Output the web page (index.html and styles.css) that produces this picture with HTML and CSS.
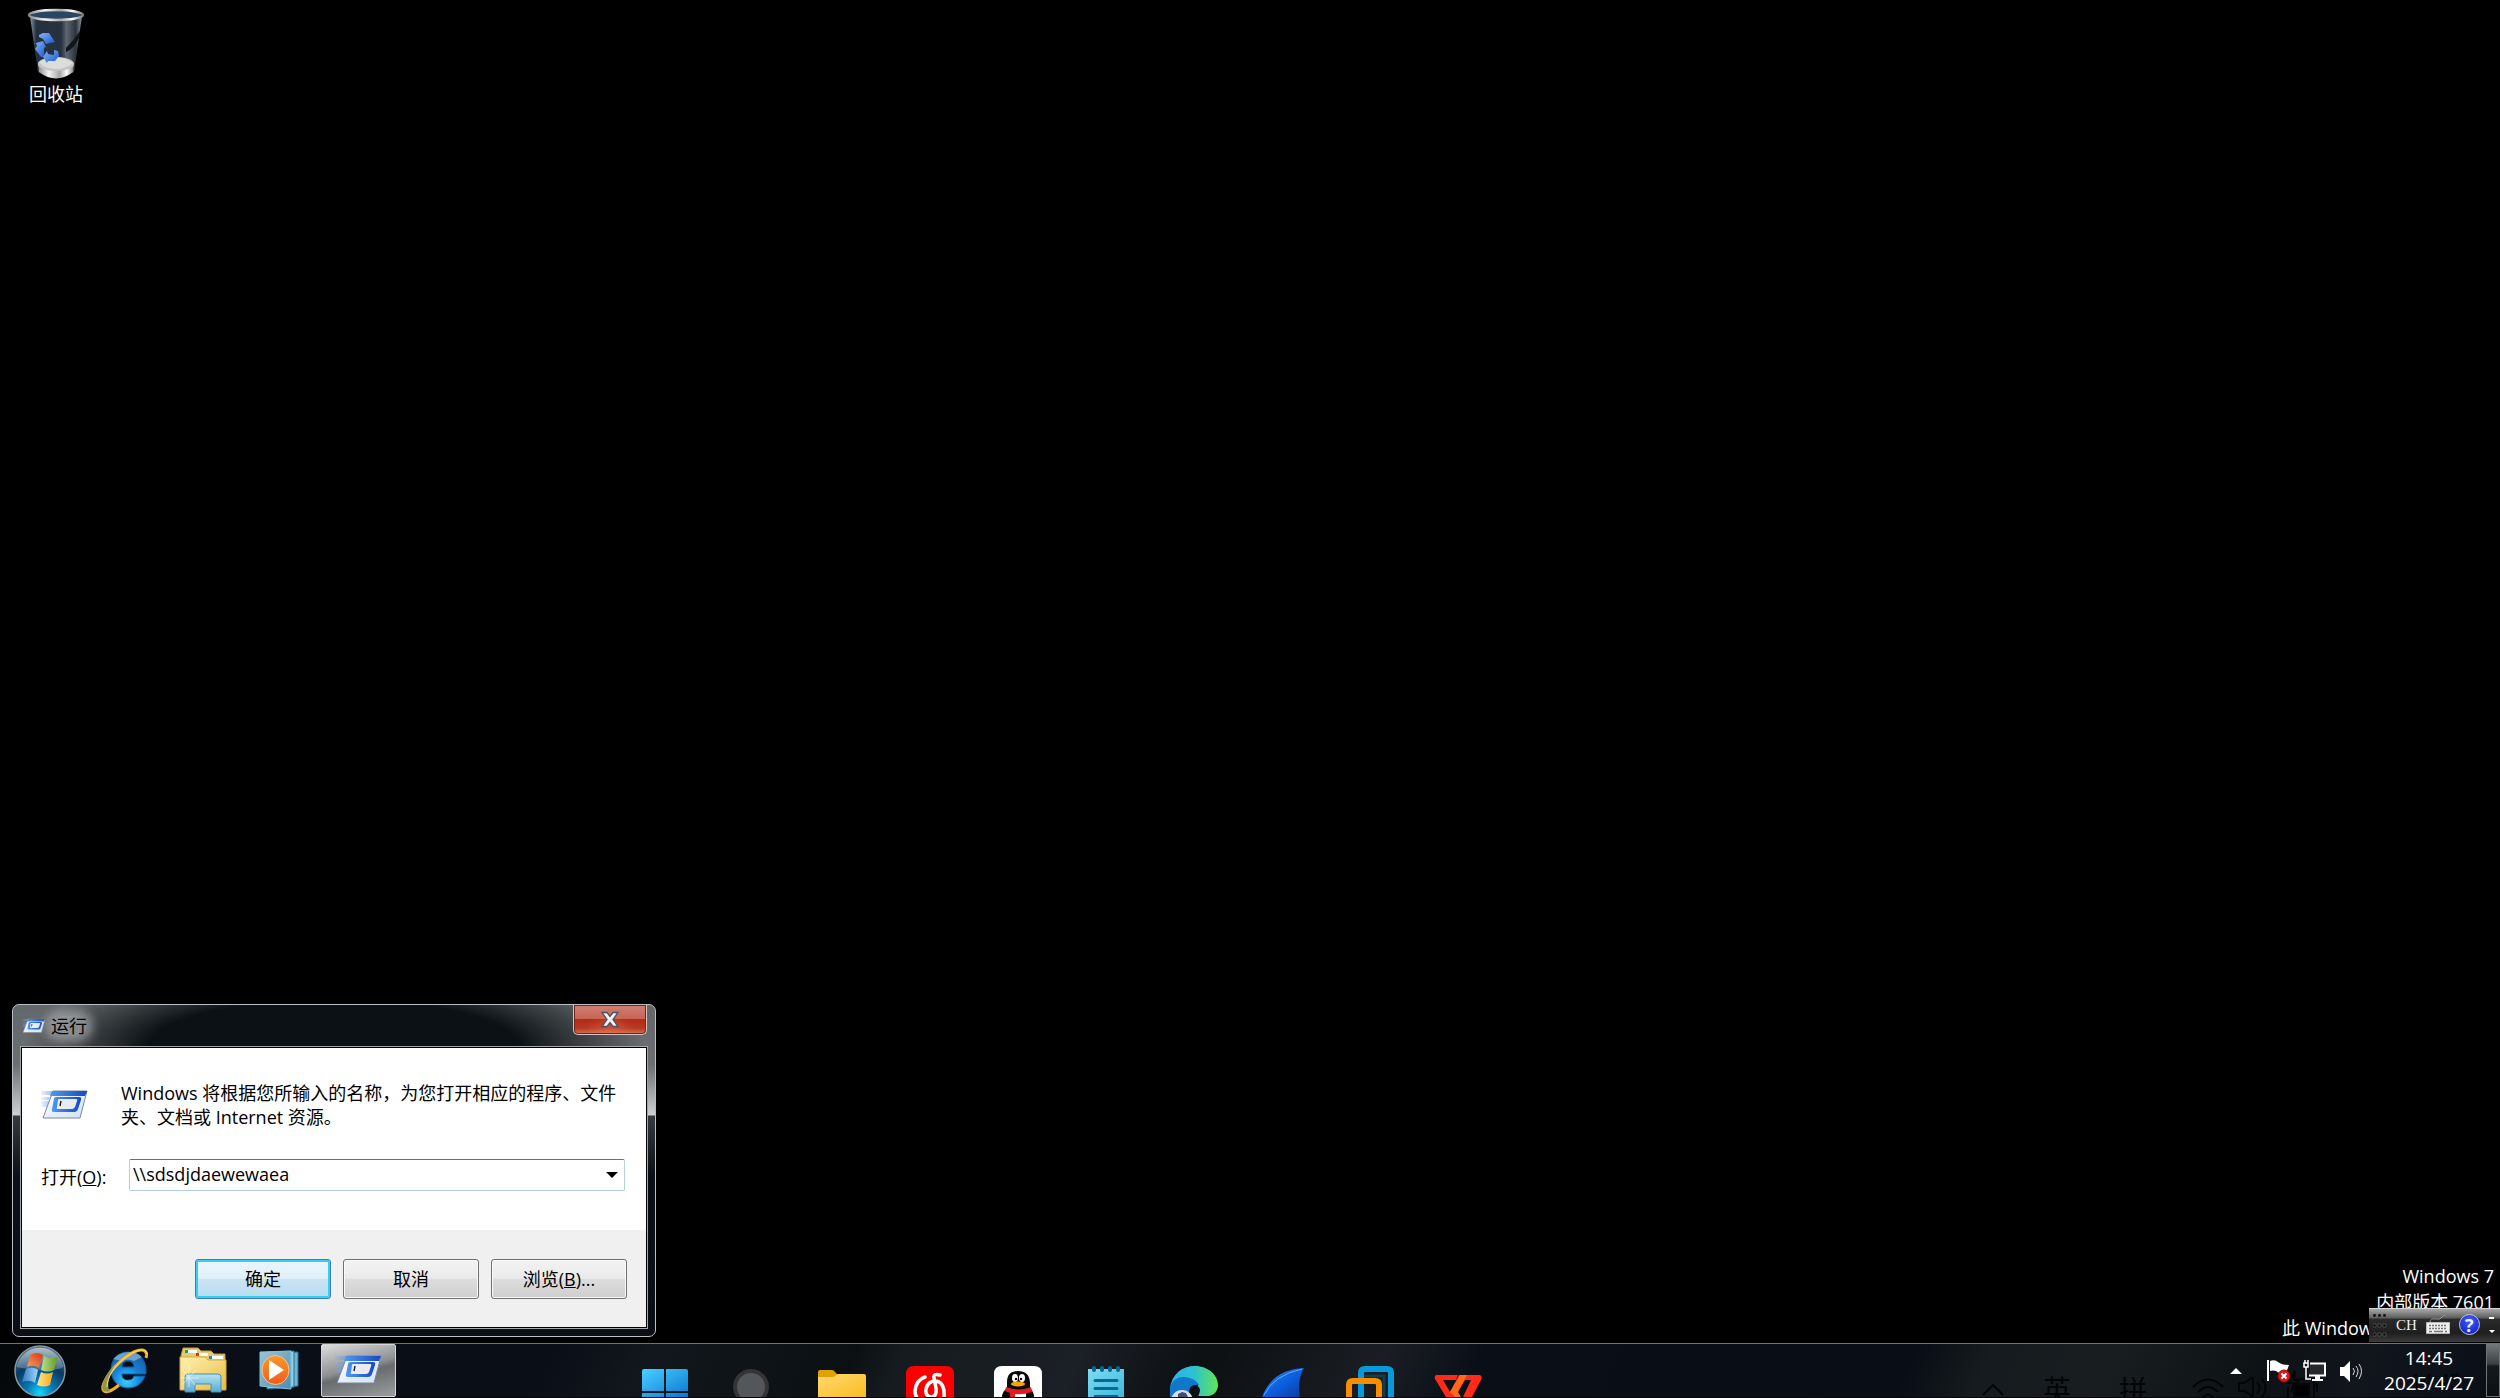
FILE: index.html
```html
<!DOCTYPE html>
<html lang="zh-CN">
<head>
    <meta charset="UTF-8">
    <meta name="viewport" content="width=device-width, initial-scale=1.0">
    <title>运行</title>

    <link rel="stylesheet" href="styles.css">

</head>
<body>

    <!-- shared icons and gradients -->
    <svg class="defs" width="0" height="0" aria-hidden="true">
        <defs>
            <linearGradient id="runBar" x1="0" x2="1" y1="0" y2="0">
                <stop offset="0" stop-color="#4f9af0"/><stop offset="1" stop-color="#1747c4"/>
            </linearGradient>
            <linearGradient id="runBody" x1="0" x2="1" y1="0" y2="1">
                <stop offset="0" stop-color="#fff"/><stop offset="1" stop-color="#cfe2fb"/>
            </linearGradient>
            <linearGradient id="runTrail" x1="0" x2="1" y1="0" y2="0">
                <stop offset="0" stop-color="#7aa7ea" stop-opacity=".2"/><stop offset="1" stop-color="#5b93e6"/>
            </linearGradient>
            <symbol id="run" viewBox="0 0 48 30">
                <path d="M0 1h14l-2 4H0zM0 7h9l-1 3H0zM0 11h8l-2 6H1z" fill="url(#runTrail)" opacity=".75"/>
                <path d="M12 1h34l-7 27H2z" fill="url(#runBody)" stroke="#7d8794"/>
                <path d="M11 1h35l-2 5H9z" fill="url(#runBar)"/>
                <path d="M15 7h23q3 0 2 3l-3 9q-1 3-4 3H13q-3 0-2-3l2-10q0-2 2-2z" fill="url(#runBar)"/>
                <path d="M18 9h17q2 0 1 2l-2 6q-1 2-3 2H17q-2 0-1-2l1-7q0-1 1-1z" fill="#e9ebee"/>
                <path d="M20 11l-1 5" stroke="#222" stroke-width="1.4"/>
            </symbol>
        </defs>
    </svg>

    <main class="desktop">
        <a class="shortcut" href="#recycle">
            <svg width="58" height="72" viewBox="0 0 58 72" aria-hidden="true">
                <defs>
                    <linearGradient id="binBody" x1="0" x2="1" y1="0" y2="0">
                        <stop offset="0" stop-color="#8e9aa5"/><stop offset=".12" stop-color="#233140"/>
                        <stop offset=".6" stop-color="#26323f"/><stop offset=".7" stop-color="#5e676f"/>
                        <stop offset=".88" stop-color="#2a343d"/><stop offset="1" stop-color="#8b959d"/>
                    </linearGradient>
                    <linearGradient id="binMetal" x1="0" x2="1" y1="0" y2="0">
                        <stop offset="0" stop-color="#8a8a8a"/><stop offset=".3" stop-color="#f4f4f4"/>
                        <stop offset=".6" stop-color="#a8a8a8"/><stop offset=".8" stop-color="#fff"/>
                        <stop offset="1" stop-color="#777"/>
                    </linearGradient>
                    <linearGradient id="binBlue" x1="0" x2="1" y1="0" y2="1">
                        <stop offset="0" stop-color="#86b4f5"/><stop offset="1" stop-color="#1a56cf"/>
                    </linearGradient>
                </defs>
                <path d="M3 8l8 56q18 11 36 0l8-56z" fill="url(#binBody)"/>
                <path d="M39 44q8-3 14-16v-5q-7 10-14 17z" fill="#10161d"/>
                <path d="M11 54l1 10q17 13 34 0l1-10z" fill="url(#binMetal)"/>
                <ellipse cx="29" cy="56" rx="18" ry="7" fill="#c4c4c4"/>
                <path d="M12 54q8-5 17-5t17 6q-7 6-18 6T12 54z" fill="#dcdcdc"/>
                <ellipse cx="29" cy="7" rx="27" ry="5" fill="#2a4663" stroke="url(#binMetal)" stroke-width="2.4"/>
                <g fill="url(#binBlue)">
                    <path d="M12 27l4-2 6 0 6 9-9 2-3-5-4-2z"/>
                    <path d="M9 35l7-2 3 6-2 1 0 9h-3l-6-8 2-3z"/>
                    <path d="M27 42l4 1 1 5-4 5h-7l-1 2-4-6 4-6 1 3 6 1z"/>
                </g>
            </svg>
            <span>回收站</span>
        </a>

        <form class="window">
            <div class="titlebar">
                <svg class="title-icon" width="24" height="16"><use href="#run"/></svg>
                <h1>运行</h1>
                <button type="button" class="close" aria-label="关闭">
                    <svg width="20" height="18" viewBox="0 0 20 18">
                        <path d="M2 1.500h5l3 4 3-4h5L13 8.500l5 7h-5l-3-4-3 4H2l5-7z" fill="#f2f2f2" stroke="#4c5265" stroke-width="1.300"/>
                    </svg>
                </button>
            </div>
            <div class="client">
                <div class="client-main">
                    <div class="message">
                        <svg width="48" height="30"><use href="#run"/></svg>
                        <p>Windows 将根据您所输入的名称，为您打开相应的程序、文件<br>夹、文档或 Internet 资源。</p>
                    </div>
                    <div class="open-row">
                        <label for="open">打开(<u>O</u>):</label>
                        <div class="combo">
                            <input id="open" type="text" value="\\sdsdjdaewewaea">
                            <button type="button" aria-label="下拉">
                                <svg width="12" height="6"><path d="M0 0h12L6 6z"/></svg>
                            </button>
                        </div>
                    </div>
                </div>
                <div class="buttons">
                    <button type="submit" class="default">确定</button>
                    <button type="button">取消</button>
                    <button type="button">浏览(<u>B</u>)...</button>
                </div>
            </div>
        </form>

        <p class="watermark">Windows 7<br>内部版本 7601<br>此 Windows 副本不是正版</p>

        <div class="langbar">
            <svg width="14" height="24" viewBox="0 0 14 24" fill="#080808" stroke="#777" stroke-width=".5">
                <path d="M0 1h3v3H0zM5 1h3v3H5zM10 1h3v3h-3zM0 11h3v3H0zM5 11h3v3H5zM10 11h3v3h-3zM0 20h3v3H0zM5 20h3v3H5zM10 20h3v3h-3z"/>
            </svg>
            <button type="button" class="lang">CH</button>
            <svg width="24" height="20" viewBox="0 0 24 20">
                <path d="M4 7q0-4 6-3 5 1 6-2 1-2 4-2" fill="none" stroke="#999"/>
                <path d="M.5 7.500h23v11H.5z" fill="#eee" stroke="#bbb"/>
                <path d="M3 10.500h18M3 13.500h18" stroke="#777" stroke-width="1.500" stroke-dasharray="2 1"/>
                <path d="M3 16.500h3M8 16.500h9M19 16.500h2" stroke="#777" stroke-width="1.500"/>
            </svg>
            <button type="button" class="help">?</button>
            <svg width="6" height="18" viewBox="0 0 6 18" fill="#fff"><path d="M0 1h5v2H0zM0 14h6l-3 3z"/></svg>
        </div>
    </main>

    <footer class="taskbar">
        <button type="button" class="start" aria-label="开始">
            <svg width="54" height="54" viewBox="0 0 54 54">
                <defs>
                    <radialGradient id="orb" cx=".5" cy=".95" r=".9">
                        <stop offset="0" stop-color="#12dcff"/><stop offset=".3" stop-color="#0879b5"/>
                        <stop offset=".65" stop-color="#083a63"/><stop offset="1" stop-color="#4a6b82"/>
                    </radialGradient>
                    <linearGradient id="orbShine" x1="0" x2="0" y1="0" y2="1">
                        <stop offset="0" stop-color="#cfd8de" stop-opacity=".75"/><stop offset="1" stop-color="#86a2b5" stop-opacity=".45"/>
                    </linearGradient>
                    <linearGradient id="fr" x1="1" x2="0" y1="0" y2="1"><stop offset="0" stop-color="#d8341c"/><stop offset="1" stop-color="#f9a25a"/></linearGradient>
                    <linearGradient id="fg" x1="0" x2="1" y1="0" y2="0"><stop offset="0" stop-color="#c0dd8a"/><stop offset="1" stop-color="#5a9c22"/></linearGradient>
                    <linearGradient id="fb" x1="0" x2="1" y1="0" y2="0"><stop offset="0" stop-color="#2d7cc9"/><stop offset="1" stop-color="#9ed6f5"/></linearGradient>
                    <linearGradient id="fy" x1="0" x2="1" y1="0" y2="0"><stop offset="0" stop-color="#ffe889"/><stop offset="1" stop-color="#f5a81a"/></linearGradient>
                </defs>
                <circle cx="27" cy="27" r="25" fill="url(#orb)" stroke="#8898a2" stroke-width="1.500"/>
                <path d="M3.500 23a24 24 0 0 1 47 0q-8 4-23 3-16-1-24-3z" fill="url(#orbShine)"/>
                <path d="M17 11q7-4 13 0l-4 13q-5-4-12-1z" fill="url(#fr)"/>
                <path d="M31 12q6 4 14 1l-4 13q-6 3-13 0z" fill="url(#fg)"/>
                <path d="M13 25q7-3 12 1l-3 13q-5-4-13-1z" fill="url(#fb)"/>
                <path d="M28 28q6 3 12 0l-3 13q-6 3-13 0z" fill="url(#fy)"/>
            </svg>
        </button>
        <div class="pinned">
            <button type="button" aria-label="Internet Explorer">
                <svg width="50" height="48" viewBox="0 0 50 48">
                    <defs>
                        <radialGradient id="ie" cx=".45" cy=".8" r=".8">
                            <stop offset="0" stop-color="#3fd0ff"/><stop offset=".5" stop-color="#1480d8"/><stop offset="1" stop-color="#1c5aa6"/>
                        </radialGradient>
                    </defs>
                    <path d="M28 6C17 6 11 14 11 24s7 18 17 18c8 0 14-4 17-12H34c-1 3-3 4-6 4-4 0-6-2-6-6h24C47 14 40 6 28 6zm-6 15c0-4 3-6 6-6s6 2 6 6z" fill="url(#ie)" stroke="#0b5ca5"/>
                    <path d="M13 13Q20 6 29 6q8 0 13 5l-8 4q-6-3-12 0z" fill="#c4dbea" opacity=".5"/>
                    <path d="M46 12c3-9-6-12-20-1C11 22-1 41 4 45c3 2 9-1 15-6" fill="none" stroke="#f2b21c" stroke-width="3"/>
                    <path d="M15 18C6 27-1 41 4 45c2 1 4 1 6 0-4-5-1-15 5-27z" fill="#93954a"/>
                    <path d="M47 8C46 1 36 4 26 11 15 19 7 31 7 41" fill="none" stroke="#ffe173"/>
                </svg>
            </button>
            <button type="button" aria-label="资源管理器">
                <svg width="48" height="48" viewBox="0 0 48 48">
                    <defs>
                        <linearGradient id="fold" x1="0" x2="1" y1="0" y2="1"><stop offset="0" stop-color="#fff1b0"/><stop offset="1" stop-color="#e9bd45"/></linearGradient>
                        <linearGradient id="stand" x1="0" x2="0" y1="0" y2="1"><stop offset="0" stop-color="#b8e2ef"/><stop offset="1" stop-color="#55acd6"/></linearGradient>
                    </defs>
                    <path d="M2 10L4 2h15l3 3h10l3 3h11v11H2z" fill="#e6ca75" stroke="#bd983c"/>
                    <path d="M9 4h9v3H9zM20 7h9v3h-9zM33 10h11v3H33z" fill="#fff"/>
                    <path d="M6 4h3v3H6z" fill="#2b9b32"/><path d="M17 7h3v3h-3z" fill="#d9331a"/><path d="M30 10h3v3h-3z" fill="#2683c6"/>
                    <path d="M1 11h25l3 3h18v30H1z" fill="url(#fold)" stroke="#d3a93f"/>
                    <path d="M6 46V31q0-3 3-3h30q3 0 3 3v15H32v-8H16v8z" fill="url(#stand)" stroke="#3f93bd"/>
                    <path d="M10 19v22M1 32h19M4 24l12 15M17 24L4 38" stroke="#fff" stroke-width=".7" opacity=".8"/>
                </svg>
            </button>
            <button type="button" aria-label="媒体播放器">
                <svg width="44" height="40" viewBox="0 0 44 40">
                    <defs>
                        <linearGradient id="wmp" x1="0" x2="1" y1="0" y2="1"><stop offset="0" stop-color="#9fc4d6"/><stop offset="1" stop-color="#4c8db0"/></linearGradient>
                        <linearGradient id="wmpDisc" x1="0" x2="0" y1="0" y2="1"><stop offset="0" stop-color="#fb9a28"/><stop offset="1" stop-color="#f05a1e"/></linearGradient>
                    </defs>
                    <path d="M12 3l27-1v34l-27 3z" fill="#6cb7d6" stroke="#2b6d90"/>
                    <path d="M8 2l27-1v36l-27 2z" fill="#8cd0e8" stroke="#2b6d90"/>
                    <path d="M1 2l31-1v38L1 36z" fill="url(#wmp)" stroke="#7bc4e0"/>
                    <ellipse cx="16.500" cy="20" rx="13.500" ry="14.500" fill="url(#wmpDisc)" stroke="#f5c594"/>
                    <path d="M10 10l15 10-15 10z" fill="#fff"/>
                </svg>
            </button>
            <button type="button" class="active" aria-label="运行">
                <svg width="48" height="30"><use href="#run"/></svg>
            </button>
        </div>

        <div class="tray">
            <svg width="12" height="7"><path d="M0 7l6-6 6 6z" fill="#fff"/></svg>
            <svg width="24" height="24" viewBox="0 0 24 24">
                <path d="M1 1v21" stroke="#fff" stroke-width="2"/>
                <path d="M3 2q5-2 8 1 4 3 11 3l-3 8q-7 1-10-2-3-1-6 0z" fill="#fff"/>
                <circle cx="17" cy="17" r="6" fill="#d61a1a" stroke="#a00"/>
                <path d="M14.500 14.500l5 5M19.500 14.500l-5 5" stroke="#fff" stroke-width="2"/>
            </svg>
            <svg width="24" height="24" viewBox="0 0 24 24">
                <path d="M7 4.500h15v12H6" fill="#26292b" stroke="#fff" stroke-width="2"/>
                <path d="M1 4h4v4H1zM2 1v3M5 1v3M3 8v12h5" fill="none" stroke="#fff" stroke-width="1.500"/>
                <path d="M12 17h5v3h3v2H9v-2h3z" fill="#fff"/>
            </svg>
            <svg width="24" height="24" viewBox="0 0 24 24">
                <path d="M1 8h4l6-6v21l-6-6H1z" fill="#fff"/>
                <path d="M14 9q3 3 0 7M17 7q4 5 0 11M20 5q5 7 0 15" fill="none" stroke="#ddd"/>
            </svg>
            <div class="clock"><time>14:45</time><time>2025/4/27</time></div>
            <button type="button" class="show-desktop" aria-label="显示桌面"></button>
        </div>

        <!-- second taskbar, peeking out from below -->
        <div class="dock">
            <svg width="48" height="28" viewBox="0 0 48 28">
                <defs><linearGradient id="win" x1="0" x2="1" y1="0" y2="1"><stop offset="0" stop-color="#4bd0ff"/><stop offset="1" stop-color="#0878d4"/></linearGradient></defs>
                <path d="M2 0h20v22H0V2q0-2 2-2zM24 0h20q2 0 2 2v20H24zM0 24h22v4H0zM24 24h22v4H24z" fill="url(#win)"/>
            </svg>
            <svg width="48" height="28" viewBox="0 0 48 28">
                <circle cx="21" cy="18" r="16" fill="#54575a" stroke="#343434" stroke-width="4"/>
            </svg>
            <svg width="48" height="28" viewBox="0 0 48 28">
                <defs><linearGradient id="dirs" x1="0" x2="1" y1="0" y2="1"><stop offset="0" stop-color="#ffd970"/><stop offset="1" stop-color="#f9bd20"/></linearGradient></defs>
                <path d="M0 3q0-2 2-2h12q2 0 3 2l3 3v6H0z" fill="#dfa200"/>
                <path d="M0 8h15q2 0 3-2 1-1 3-1h25q2 0 2 2v21H0z" fill="url(#dirs)"/>
            </svg>
            <svg width="48" height="31" viewBox="0 0 48 31">
                <path d="M8 0h32q8 0 8 8v23H0V8q0-8 8-8z" fill="#fb0000"/>
                <path d="M19 11q-9 3-10 14 0 5 3 8M34 9q-7-2-6 3l2 10c1 7-2 9-5 9s-6-3-5-8c1-6 6-8 9-8 6 0 10 5 9 17" fill="none" stroke="#fff" stroke-width="3.500" stroke-linecap="round"/>
            </svg>
            <svg width="48" height="31" viewBox="0 0 48 31">
                <path d="M8 0h32q8 0 8 8v23H0V8q0-8 8-8z" fill="#fff"/>
                <path d="M13 22V16Q13 5 24 5t12 11v6q4 4 4 9H8q0-5 5-9z" fill="#080808"/>
                <path d="M16 25h16v6H16z" fill="#fff"/>
                <ellipse cx="21" cy="12" rx="3" ry="4" fill="#fff"/><ellipse cx="28" cy="12" rx="3" ry="4" fill="#fff"/>
                <circle cx="22" cy="13" r="1.200"/><circle cx="27" cy="13" r="1.200"/>
                <ellipse cx="24" cy="18" rx="7" ry="2.500" fill="#f7a400"/>
                <path d="M12 21q12 5 25 0l1 5q-9 3-17 2v3h-5v-4l-5-2z" fill="#e21a22"/>
            </svg>
            <svg width="48" height="31" viewBox="0 0 48 31">
                <defs><linearGradient id="note" x1="0" x2="1" y1="0" y2="1"><stop offset="0" stop-color="#7ddcf5"/><stop offset="1" stop-color="#40b8da"/></linearGradient></defs>
                <path d="M6 3h36v28H6z" fill="url(#note)"/>
                <path d="M12 2v2M20 2v2M28 2v2M36 2v2" stroke="#046a92" stroke-width="4" stroke-linecap="round"/>
                <path d="M13 14.500h22M13 22.500h22M13 30.500h22" stroke="#046a92" stroke-width="3" stroke-linecap="round"/>
            </svg>
            <svg width="48" height="31" viewBox="0 0 48 31">
                <defs>
                    <linearGradient id="edge" x1="0" x2="1" y1="0" y2="0"><stop offset="0" stop-color="#2eb0f0"/><stop offset=".5" stop-color="#2cc3cf"/><stop offset="1" stop-color="#63e352"/></linearGradient>
                </defs>
                <path d="M0 22C2 8 12 0 25 0s23 9 23 19c0 6-4 10-9 11H28V18q-12-10-28 4z" fill="url(#edge)"/>
                <path d="M0 20Q5 10 15 11q10 1 14 8-8-2-10 12H0z" fill="#1078ca"/>
                <path d="M19 27q0-8 6-8 5 1 5 6l-2 6h-9z" fill="#0c1014"/>
                <circle cx="12" cy="35" r="11" fill="#dedce2"/>
                <path d="M8 31v-3l4-2 4 1 2 4z" fill="#444a70"/>
            </svg>
            <svg width="48" height="30" viewBox="0 0 48 30">
                <defs><linearGradient id="fin" x1="0" x2="1" y1="0" y2="1"><stop offset="0" stop-color="#3386ee"/><stop offset=".5" stop-color="#0d60e0"/><stop offset="1" stop-color="#0a3a9a"/></linearGradient></defs>
                <path d="M4 30C11 12 24 2 46 1q-7 12-4 29z" fill="url(#fin)"/>
                <path d="M6 28Q16 8 44 2" fill="none" stroke="#64a8f6"/>
            </svg>
            <svg width="48" height="31" viewBox="0 0 48 31" fill="none" stroke-width="6">
                <path d="M15 31V7q0-4 4-4h22q4 0 4 4v24" stroke="#0699dc"/>
                <path d="M18 10h20v21" stroke="#0699dc" stroke-width="3" opacity=".25"/>
                <path d="M3 31V19q0-4 4-4h22q4 0 4 4v12" stroke="#f78f00"/>
            </svg>
            <svg width="48" height="22" viewBox="0 0 48 22">
                <path d="M2 0h22l-2 5H9l7 12 9-17h8l5 0h8q3 2 1 5l-9 17h-9l8-17h-6L21 22h-9L1 4Q0 1 2 0z" fill="#ff2a18"/>
                <path d="M26 0h7l-9 17 3 5h-6l-5-5z" fill="#ff6a1a"/>
            </svg>
        </div>
        <div class="dock-tray">
            <svg width="22" height="26" viewBox="0 0 22 26"><path d="M1 24L11 14l10 10"/></svg>
            <span>英</span>
            <span>拼</span>
            <svg class="wifi" width="32" height="26" viewBox="0 0 32 26"><path d="M1 16q15-15 30 0M6 21q10-10 20 0M11 26q5-5 10 0"/></svg>
            <svg width="34" height="20" viewBox="0 0 34 20"><path d="M1 6h5l9-6v20l-8-6H1zM19 5q5 5 0 12M24 2q7 8 0 18"/></svg>
            <svg width="32" height="26" viewBox="0 0 32 26"><path d="M13 8h15v20H2V16M28 13h3v8M9 0L2 12h6l-3 9 8-12H8z"/><path d="M8 13h15v12H8z" fill="#000"/></svg>
            <time>14:45</time>
        </div>
    </footer>

</body>
</html>
```
FILE: styles.css
```css
html, body {
    margin: 0;
    padding: 0;
    height: 100%;
}
body {
    display: flex;
    flex-direction: column;
    overflow: hidden;
    background-color: black;
    color: black;
    font-family: "Open Sans", "Noto Sans CJK SC", sans-serif;
    font-size: 18px;
    line-height: 24px;
}
button, input {
    font: inherit;
    color: inherit;
}
button {
    display: flex;
    align-items: center;
    justify-content: center;
    margin: 0;
    padding: 0;
    border: 0;
    background: none;
}
svg {
    display: block;
    flex: none;
}
.defs {
    position: absolute;
}

/* desktop */
.desktop {
    position: relative;
    flex: 1;
}
.shortcut {
    display: flex;
    flex-direction: column;
    align-items: center;
    gap: 2px;
    width: 112px;
    padding-top: 8px;
    color: white;
    text-decoration: none;
}
.watermark {
    position: absolute;
    right: 6px;
    bottom: 2px;
    margin: 0;
    color: white;
    line-height: 26px;
    text-align: right;
}

/* run window */
.window {
    position: absolute;
    left: 12px;
    bottom: 6px;
    box-sizing: border-box;
    width: 644px;
    padding: 0 7px 7px;
    border: 1px solid #b9bfc4;
    border-radius: 7px;
    background: linear-gradient(#62676a, #6c7073 60px, #cfd0d2 110px, #343a3d 111px, #0b1016 170px, #0a0e15);
    overflow: hidden;
}
.titlebar {
    display: flex;
    align-items: center;
    gap: 5px;
    height: 41px;
    margin: 0 -7px;
    padding-left: 9px;
    background: radial-gradient(ellipse 230px 58px at 50% 100%, #0c1115 80%, rgba(12, 17, 21, 0) 135%);
}
.title-icon {
    margin-top: 1px;
}
.titlebar h1 {
    margin: 1px 0 0;
    border-radius: 12px;
    background-color: rgba(190, 193, 195, 0.55);
    box-shadow: 0 0 10px 6px rgba(190, 193, 195, 0.55);
    font-size: 18px;
    font-weight: normal;
    line-height: 20px;
}
.close {
    align-self: flex-start;
    box-sizing: border-box;
    width: 74px;
    height: 30px;
    margin-left: auto;
    margin-right: 8px;
    border: 1px solid #d6c4c2;
    border-top: 0;
    border-radius: 0 0 5px 5px;
    background: radial-gradient(ellipse at 50% 100%, rgba(240, 120, 80, 0.5), transparent 50%), linear-gradient(#cf8072, #c76456 48%, #b42a15 50%, #b83822 80%, #d0775e);
    box-shadow: inset 0 0 0 1px #6b261e;
}
.client {
    border: 1px solid #a4a9ac;
    outline: 1px solid black;
    outline-offset: -2px;
    background-color: #f0f0f0;
}
.client-main {
    padding: 34px 20px 39px 20px;
    background-color: white;
}
.message {
    display: flex;
    align-items: center;
    gap: 32px;
}
.message p {
    margin: 0;
    white-space: nowrap;
}
.open-row {
    display: flex;
    align-items: center;
    gap: 13px;
    margin-top: 30px;
}
.open-row label {
    width: 75px;
    padding-top: 4px;
}
.combo {
    display: flex;
    align-items: center;
    box-sizing: border-box;
    width: 496px;
    height: 32px;
    border: 1px solid #b5cfe7;
    border-top-color: #3d7bad;
    border-radius: 2px;
}
.combo input {
    flex: 1;
    min-width: 0;
    padding: 0 3px 2px;
    border: 0;
    outline: 0;
    background: none;
}
.combo button {
    width: 25px;
}
.buttons {
    display: flex;
    justify-content: flex-end;
    gap: 12px;
    padding: 29px 20px 29px;
}
.buttons button {
    box-sizing: border-box;
    width: 136px;
    height: 40px;
    border: 1px solid #707070;
    border-radius: 3px;
    background: linear-gradient(#f2f2f2, #ebebeb 48%, #dddddd 50%, #cfcfcf);
    box-shadow: inset 0 0 0 1px #fafafa;
}
.buttons .default {
    border-color: #3c7fb1;
    background: linear-gradient(#eaf6fd, #e0f0f8 48%, #c9e5f4 50%, #b8daef);
    box-shadow: inset 0 0 0 2px #35cdf5;
}

/* language bar */
.langbar {
    position: absolute;
    right: 0;
    bottom: 1px;
    display: flex;
    align-items: center;
    gap: 9px;
    box-sizing: border-box;
    width: 131px;
    height: 34px;
    padding: 0 5px 2px 4px;
    border-top: 1px solid #d5d5d5;
    background: linear-gradient(#a8a8a8, #5d5d5d 9px, #2b2b2b 10px, #1e1e1e 24px, #3d3d3d);
    color: #eee;
}
.lang {
    font-family: "Liberation Serif", serif;
    font-size: 15px;
}
.help {
    width: 21px;
    height: 21px;
    border: 1px solid #c8c8d8;
    border-radius: 50%;
    background: radial-gradient(circle at 50% 30%, #3f60ff, #0a18b8);
    font-size: 18px;
    font-weight: bold;
}

/* taskbar */
.taskbar {
    position: relative;
    display: flex;
    box-sizing: border-box;
    height: 55px;
    border-top: 1px solid #6f7476;
    border-bottom: 1px solid #05070a;
    background: linear-gradient(115deg, #04080a, #0a0e16 8%, #0a0e16 22%, #12171d 26%, #0b1013 34%, #151b1e 36%, #1b1f26 43%, #0c1013 48%, #1a1e24 55%, #0a0e16 59%, #090d15 76%, #151b1e 79%, #181d20 84%, #0d1215 90%, #11151c 94%, #0a0e16);
    overflow: hidden;
}
.start {
    width: 80px;
}
.pinned {
    display: flex;
    gap: 3px;
    margin-left: 7px;
}
.pinned button {
    box-sizing: border-box;
    width: 75px;
    padding-bottom: 2px;
}
.pinned .active {
    border: 1px solid #d3d5d6;
    border-radius: 2px;
    background: linear-gradient(165deg, #dcdcdc, #8e9193 45%, #686c6e 55%, #9b9d9e);
}
.tray {
    z-index: 1;
    display: flex;
    align-items: center;
    gap: 12px;
    margin-left: auto;
}
.tray > svg:first-child {
    margin-right: 13px;
}
.clock {
    display: flex;
    flex-direction: column;
    align-items: center;
    margin-left: 9px;
    color: white;
    font-size: 19px;
    line-height: 25px;
}
.show-desktop {
    align-self: stretch;
    box-sizing: border-box;
    width: 14px;
    border: 1px solid #6f7476;
    border-top: 0;
    background: linear-gradient(#73787b, #3a4043 20px, #14191c 22px, #0b1013);
}

/* second taskbar */
.dock, .dock-tray {
    position: absolute;
    bottom: 0;
    display: flex;
    align-items: flex-end;
    pointer-events: none;
}
.dock {
    left: 642px;
    gap: 40px;
}
.dock-tray {
    right: 39px;
    height: 26px;
    color: #030506;
    font-size: 28px;
    line-height: 38px;
}
.dock-tray svg {
    fill: none;
    stroke: #030506;
    stroke-width: 2px;
}
.dock-tray span {
    align-self: flex-start;
    margin-left: 39px;
}
.dock-tray span + span {
    margin-left: 48px;
}
.dock-tray .wifi {
    margin-left: 45px;
}
.dock-tray svg + svg {
    margin-left: 14px;
}
.dock-tray time {
    margin-left: 92px;
    font-size: 20px;
    line-height: 32px;
}
```
